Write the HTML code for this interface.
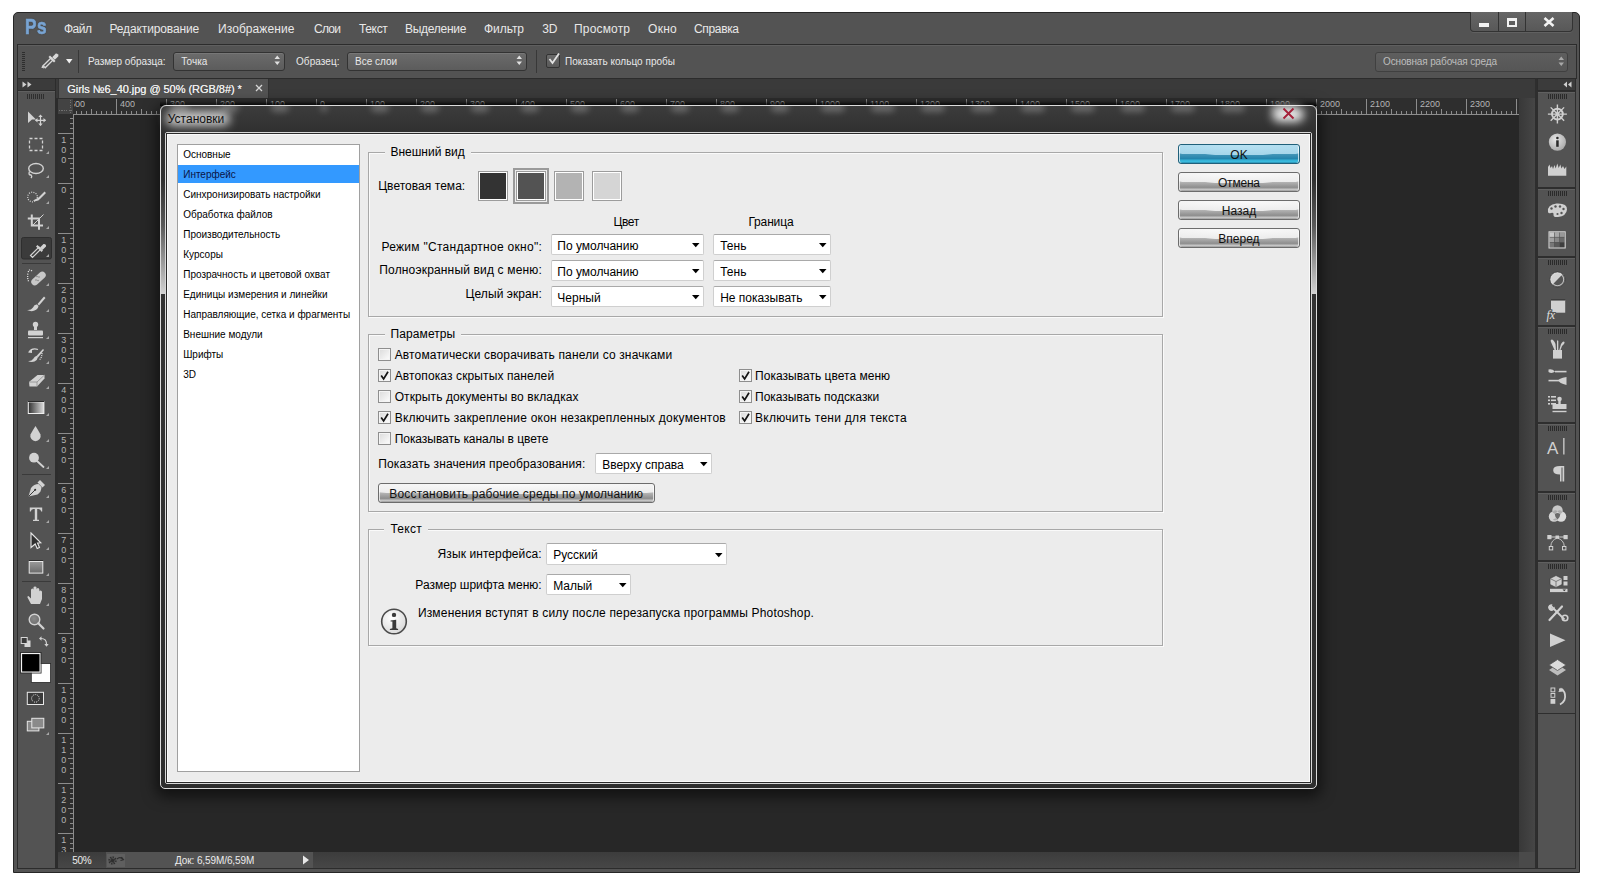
<!DOCTYPE html>
<html><head><meta charset="utf-8">
<style>
*{box-sizing:border-box;margin:0;padding:0}
html,body{width:1597px;height:892px;overflow:hidden;background:#fff;font-family:"Liberation Sans",sans-serif}
.a{position:absolute}
.t{position:absolute;white-space:pre;line-height:1}
svg.a{overflow:visible}

</style></head><body>
<div class="a" style="left:13px;top:12px;width:1567px;height:861px;background:#535353;border:1px solid #262626;border-radius:5px 5px 0 0"></div>
<div class="a" style="left:1470px;top:12px;width:103px;height:20px;background:linear-gradient(#666,#585858);border:1px solid #333;border-top:none;border-radius:0 0 4px 4px;box-shadow:0 1px 0 #606060"></div>
<div class="a" style="left:1498px;top:12px;width:1px;height:19px;background:#333"></div>
<div class="a" style="left:1525px;top:12px;width:1px;height:19px;background:#333"></div>
<div class="a" style="left:1479px;top:23px;width:10px;height:4px;background:#f2f2f2"></div>
<div class="a" style="left:1507px;top:18px;width:10px;height:9px;border:2px solid #f2f2f2;border-top-width:3px"></div>
<svg class="a" style="left:1543px;top:17px;" width="12" height="10" viewBox="0 0 12 10"><path d="M1.5 1 L10.5 9 M10.5 1 L1.5 9" stroke="#f2f2f2" stroke-width="2.6"/></svg>
<div class="t" style="left:24.60px;top:15.98px;font-size:22px;color:#79a4d2;font-weight:bold;font-family:'Liberation Sans';transform:scaleX(0.78);transform-origin:0 0;letter-spacing:0.8px;-webkit-text-stroke:0.7px #79a4d2;text-shadow:0 0 1.5px #24323f;">Ps</div>
<div class="t" style="left:64.00px;top:22.64px;font-size:12px;color:#e8e8e8;font-weight:normal;font-family:'Liberation Sans';letter-spacing:-0.505px;">Файл</div>
<div class="t" style="left:109.50px;top:22.64px;font-size:12px;color:#e8e8e8;font-weight:normal;font-family:'Liberation Sans';letter-spacing:-0.132px;">Редактирование</div>
<div class="t" style="left:218.00px;top:22.64px;font-size:12px;color:#e8e8e8;font-weight:normal;font-family:'Liberation Sans';letter-spacing:0.081px;">Изображение</div>
<div class="t" style="left:314.00px;top:22.64px;font-size:12px;color:#e8e8e8;font-weight:normal;font-family:'Liberation Sans';letter-spacing:-0.729px;">Слои</div>
<div class="t" style="left:359.00px;top:22.64px;font-size:12px;color:#e8e8e8;font-weight:normal;font-family:'Liberation Sans';letter-spacing:-0.355px;">Текст</div>
<div class="t" style="left:405.00px;top:22.64px;font-size:12px;color:#e8e8e8;font-weight:normal;font-family:'Liberation Sans';letter-spacing:-0.274px;">Выделение</div>
<div class="t" style="left:484.00px;top:22.64px;font-size:12px;color:#e8e8e8;font-weight:normal;font-family:'Liberation Sans';letter-spacing:-0.062px;">Фильтр</div>
<div class="t" style="left:542.30px;top:22.64px;font-size:12px;color:#e8e8e8;font-weight:normal;font-family:'Liberation Sans';letter-spacing:-0.344px;">3D</div>
<div class="t" style="left:574.00px;top:22.64px;font-size:12px;color:#e8e8e8;font-weight:normal;font-family:'Liberation Sans';letter-spacing:0.170px;">Просмотр</div>
<div class="t" style="left:648.00px;top:22.64px;font-size:12px;color:#e8e8e8;font-weight:normal;font-family:'Liberation Sans';letter-spacing:0.303px;">Окно</div>
<div class="t" style="left:694.00px;top:22.64px;font-size:12px;color:#e8e8e8;font-weight:normal;font-family:'Liberation Sans';letter-spacing:-0.346px;">Справка</div>
<div class="a" style="left:17px;top:44px;width:1560px;height:35px;background:#535353;border:1px solid #2c2c2c;border-bottom:none;box-shadow:inset 0 1px 0 #5f5f5f"></div>
<div class="a" style="left:22px;top:52px;width:3px;height:20px;background:repeating-linear-gradient(#2e2e2e 0 1px,transparent 1px 2px)"></div>
<svg class="a" style="left:40px;top:48.6px;" width="20" height="20" viewBox="0 0 20 20"><g fill="none" stroke="#d8d8d8" stroke-width="1.3"><path d="M3 17 L2.2 18.2 L3.2 18.6 Z" fill="#d8d8d8"/><path d="M3.2 16.8 L11 9 L13 11 L5.2 18.8 Z"/></g><path d="M10 6.5 L15.5 12 L14 13.5 L8.5 8 Z" fill="#d8d8d8"/><path d="M12.2 8.2 L15.8 4.6 A2.2 2.2 0 0 1 18.4 7.2 L14.8 10.8 Z" fill="#d8d8d8"/></svg>
<svg class="a" style="left:66px;top:58.6px;" width="7" height="5" viewBox="0 0 7 5"><path d="M0 0 H6.5 L3.25 4.5 Z" fill="#f0f0f0"/></svg>
<div class="a" style="left:78px;top:50px;width:1px;height:23px;background:#383838"></div>
<div class="t" style="left:88.00px;top:56.73px;font-size:10px;color:#e8e8e8;font-weight:normal;font-family:'Liberation Sans';letter-spacing:-0.044px;">Размер образца:</div>
<div class="a" style="left:173px;top:52px;width:112px;height:19px;background:linear-gradient(#6b6b6b,#5c5c5c);border:1px solid #333;border-radius:3px;box-shadow:inset 0 1px 0 #777"></div>
<div class="t" style="left:181.30px;top:56.73px;font-size:10px;color:#e8e8e8;font-weight:normal;font-family:'Liberation Sans';">Точка</div>
<svg class="a" style="left:274px;top:55px;" width="7" height="11" viewBox="0 0 7 11"><path d="M0.5 4 L3.25 0.5 L6 4 Z M0.5 6.5 L3.25 10 L6 6.5 Z" fill="#e0e0e0"/></svg>
<div class="t" style="left:296.00px;top:56.73px;font-size:10px;color:#e8e8e8;font-weight:normal;font-family:'Liberation Sans';letter-spacing:0.062px;">Образец:</div>
<div class="a" style="left:347px;top:52px;width:180px;height:19px;background:linear-gradient(#6b6b6b,#5c5c5c);border:1px solid #333;border-radius:3px;box-shadow:inset 0 1px 0 #777"></div>
<div class="t" style="left:355.00px;top:56.73px;font-size:10px;color:#e8e8e8;font-weight:normal;font-family:'Liberation Sans';">Все слои</div>
<svg class="a" style="left:516px;top:55px;" width="7" height="11" viewBox="0 0 7 11"><path d="M0.5 4 L3.25 0.5 L6 4 Z M0.5 6.5 L3.25 10 L6 6.5 Z" fill="#e0e0e0"/></svg>
<div class="a" style="left:536px;top:50px;width:1px;height:23px;background:#383838"></div>
<div class="a" style="left:546px;top:54px;width:14px;height:14px;background:linear-gradient(#6a6a6a,#5a5a5a);border:1px solid #333;border-radius:2px"></div>
<svg class="a" style="left:547px;top:52px;" width="14" height="14" viewBox="0 0 14 14"><path d="M2.5 7 L5.5 11 L12 1.5" fill="none" stroke="#e4e4e4" stroke-width="1.8"/></svg>
<div class="t" style="left:565.00px;top:56.73px;font-size:10px;color:#e8e8e8;font-weight:normal;font-family:'Liberation Sans';letter-spacing:0.021px;">Показать кольцо пробы</div>
<div class="a" style="left:1375px;top:52px;width:193px;height:20px;background:linear-gradient(#5e5e5e,#565656);border:1px solid #404040;border-radius:3px"></div>
<div class="t" style="left:1383.00px;top:56.53px;font-size:10px;color:#bdbdbd;font-weight:normal;font-family:'Liberation Sans';letter-spacing:-0.139px;">Основная рабочая среда</div>
<svg class="a" style="left:1558px;top:56px;" width="7" height="11" viewBox="0 0 7 11"><path d="M0.5 4 L3.25 0.5 L6 4 Z M0.5 6.5 L3.25 10 L6 6.5 Z" fill="#a8a8a8"/></svg>
<div class="a" style="left:17px;top:78px;width:39px;height:13px;background:#3b3b3b;border:1px solid #2c2c2c"></div>
<svg class="a" style="left:22px;top:81px;" width="12" height="8" viewBox="0 0 12 8"><path d="M0.5 0.5 L4.5 3.5 L0.5 6.5 Z M5.5 0.5 L9.5 3.5 L5.5 6.5 Z" fill="#cfcfcf"/></svg>
<div class="a" style="left:17px;top:90px;width:39px;height:779px;background:#535353;border:1px solid #2c2c2c;box-shadow:inset 0 1px 0 #606060"></div>
<div class="a" style="left:27px;top:94px;width:18px;height:5px;background:repeating-linear-gradient(90deg,#2e2e2e 0 1px,transparent 1px 2px)"></div>
<div class="a" style="left:56px;top:78px;width:1481px;height:21px;background:#3a3a3a;border-top:1px solid #2c2c2c"></div>
<div class="a" style="left:58px;top:79px;width:211px;height:20px;background:#535353;border-left:1px solid #333;border-right:1px solid #333"></div>
<div class="t" style="left:67.30px;top:84.09px;font-size:11px;color:#ececec;font-weight:bold;font-family:'Liberation Sans';letter-spacing:-0.039px;font-weight:normal;text-shadow:0 0 0.4px #ececec;">Girls №6_40.jpg @ 50% (RGB/8#) *</div>
<svg class="a" style="left:255px;top:84px;" width="8" height="8" viewBox="0 0 8 8"><path d="M1 1 L7 7 M7 1 L1 7" stroke="#d6d6d6" stroke-width="1.3"/></svg>
<div class="a" style="left:56px;top:98px;width:2px;height:771px;background:#2c2c2c"></div>
<div class="a" style="left:58px;top:98px;width:1461px;height:16px;background:#2e2e2e"></div>
<div class="a" style="left:58px;top:114px;width:16px;height:738px;background:#2e2e2e"></div>
<div class="a" style="left:58px;top:99px;width:15px;height:15px;background:#434343"></div>
<div class="a" style="left:70px;top:100px;width:1px;height:13px;background:repeating-linear-gradient(#707070 0 1px,transparent 1px 2.5px)"></div>
<div class="a" style="left:59px;top:110px;width:13px;height:1px;background:repeating-linear-gradient(90deg,#707070 0 1px,transparent 1px 2.5px)"></div>
<div class="a" style="left:74px;top:114px;width:1445px;height:738px;background:#272727"></div>
<div class="a" style="left:74px;top:114px;width:1445px;height:1px;background:#8c8c8c"></div>
<div class="a" style="left:73px;top:114px;width:1px;height:738px;background:#8c8c8c"></div>
<svg class="a" style="left:0;top:0" width="1597" height="892"><g fill="#8c8c8c"><rect x="76" y="111" width="1" height="3"/><rect x="81" y="111" width="1" height="3"/><rect x="86" y="111" width="1" height="3"/><rect x="91" y="109" width="1" height="5"/><rect x="96" y="111" width="1" height="3"/><rect x="101" y="111" width="1" height="3"/><rect x="106" y="111" width="1" height="3"/><rect x="111" y="111" width="1" height="3"/><rect x="116" y="99" width="1" height="15"/><rect x="121" y="111" width="1" height="3"/><rect x="126" y="111" width="1" height="3"/><rect x="131" y="111" width="1" height="3"/><rect x="136" y="111" width="1" height="3"/><rect x="141" y="109" width="1" height="5"/><rect x="146" y="111" width="1" height="3"/><rect x="151" y="111" width="1" height="3"/><rect x="156" y="111" width="1" height="3"/><rect x="161" y="111" width="1" height="3"/><rect x="166" y="99" width="1" height="15"/><rect x="171" y="111" width="1" height="3"/><rect x="176" y="111" width="1" height="3"/><rect x="181" y="111" width="1" height="3"/><rect x="186" y="111" width="1" height="3"/><rect x="191" y="109" width="1" height="5"/><rect x="196" y="111" width="1" height="3"/><rect x="201" y="111" width="1" height="3"/><rect x="206" y="111" width="1" height="3"/><rect x="211" y="111" width="1" height="3"/><rect x="216" y="99" width="1" height="15"/><rect x="221" y="111" width="1" height="3"/><rect x="226" y="111" width="1" height="3"/><rect x="231" y="111" width="1" height="3"/><rect x="236" y="111" width="1" height="3"/><rect x="241" y="109" width="1" height="5"/><rect x="246" y="111" width="1" height="3"/><rect x="251" y="111" width="1" height="3"/><rect x="256" y="111" width="1" height="3"/><rect x="261" y="111" width="1" height="3"/><rect x="266" y="99" width="1" height="15"/><rect x="271" y="111" width="1" height="3"/><rect x="276" y="111" width="1" height="3"/><rect x="281" y="111" width="1" height="3"/><rect x="286" y="111" width="1" height="3"/><rect x="291" y="109" width="1" height="5"/><rect x="296" y="111" width="1" height="3"/><rect x="301" y="111" width="1" height="3"/><rect x="306" y="111" width="1" height="3"/><rect x="311" y="111" width="1" height="3"/><rect x="316" y="99" width="1" height="15"/><rect x="321" y="111" width="1" height="3"/><rect x="326" y="111" width="1" height="3"/><rect x="331" y="111" width="1" height="3"/><rect x="336" y="111" width="1" height="3"/><rect x="341" y="109" width="1" height="5"/><rect x="346" y="111" width="1" height="3"/><rect x="351" y="111" width="1" height="3"/><rect x="356" y="111" width="1" height="3"/><rect x="361" y="111" width="1" height="3"/><rect x="366" y="99" width="1" height="15"/><rect x="371" y="111" width="1" height="3"/><rect x="376" y="111" width="1" height="3"/><rect x="381" y="111" width="1" height="3"/><rect x="386" y="111" width="1" height="3"/><rect x="391" y="109" width="1" height="5"/><rect x="396" y="111" width="1" height="3"/><rect x="401" y="111" width="1" height="3"/><rect x="406" y="111" width="1" height="3"/><rect x="411" y="111" width="1" height="3"/><rect x="416" y="99" width="1" height="15"/><rect x="421" y="111" width="1" height="3"/><rect x="426" y="111" width="1" height="3"/><rect x="431" y="111" width="1" height="3"/><rect x="436" y="111" width="1" height="3"/><rect x="441" y="109" width="1" height="5"/><rect x="446" y="111" width="1" height="3"/><rect x="451" y="111" width="1" height="3"/><rect x="456" y="111" width="1" height="3"/><rect x="461" y="111" width="1" height="3"/><rect x="466" y="99" width="1" height="15"/><rect x="471" y="111" width="1" height="3"/><rect x="476" y="111" width="1" height="3"/><rect x="481" y="111" width="1" height="3"/><rect x="486" y="111" width="1" height="3"/><rect x="491" y="109" width="1" height="5"/><rect x="496" y="111" width="1" height="3"/><rect x="501" y="111" width="1" height="3"/><rect x="506" y="111" width="1" height="3"/><rect x="511" y="111" width="1" height="3"/><rect x="516" y="99" width="1" height="15"/><rect x="521" y="111" width="1" height="3"/><rect x="526" y="111" width="1" height="3"/><rect x="531" y="111" width="1" height="3"/><rect x="536" y="111" width="1" height="3"/><rect x="541" y="109" width="1" height="5"/><rect x="546" y="111" width="1" height="3"/><rect x="551" y="111" width="1" height="3"/><rect x="556" y="111" width="1" height="3"/><rect x="561" y="111" width="1" height="3"/><rect x="566" y="99" width="1" height="15"/><rect x="571" y="111" width="1" height="3"/><rect x="576" y="111" width="1" height="3"/><rect x="581" y="111" width="1" height="3"/><rect x="586" y="111" width="1" height="3"/><rect x="591" y="109" width="1" height="5"/><rect x="596" y="111" width="1" height="3"/><rect x="601" y="111" width="1" height="3"/><rect x="606" y="111" width="1" height="3"/><rect x="611" y="111" width="1" height="3"/><rect x="616" y="99" width="1" height="15"/><rect x="621" y="111" width="1" height="3"/><rect x="626" y="111" width="1" height="3"/><rect x="631" y="111" width="1" height="3"/><rect x="636" y="111" width="1" height="3"/><rect x="641" y="109" width="1" height="5"/><rect x="646" y="111" width="1" height="3"/><rect x="651" y="111" width="1" height="3"/><rect x="656" y="111" width="1" height="3"/><rect x="661" y="111" width="1" height="3"/><rect x="666" y="99" width="1" height="15"/><rect x="671" y="111" width="1" height="3"/><rect x="676" y="111" width="1" height="3"/><rect x="681" y="111" width="1" height="3"/><rect x="686" y="111" width="1" height="3"/><rect x="691" y="109" width="1" height="5"/><rect x="696" y="111" width="1" height="3"/><rect x="701" y="111" width="1" height="3"/><rect x="706" y="111" width="1" height="3"/><rect x="711" y="111" width="1" height="3"/><rect x="716" y="99" width="1" height="15"/><rect x="721" y="111" width="1" height="3"/><rect x="726" y="111" width="1" height="3"/><rect x="731" y="111" width="1" height="3"/><rect x="736" y="111" width="1" height="3"/><rect x="741" y="109" width="1" height="5"/><rect x="746" y="111" width="1" height="3"/><rect x="751" y="111" width="1" height="3"/><rect x="756" y="111" width="1" height="3"/><rect x="761" y="111" width="1" height="3"/><rect x="766" y="99" width="1" height="15"/><rect x="771" y="111" width="1" height="3"/><rect x="776" y="111" width="1" height="3"/><rect x="781" y="111" width="1" height="3"/><rect x="786" y="111" width="1" height="3"/><rect x="791" y="109" width="1" height="5"/><rect x="796" y="111" width="1" height="3"/><rect x="801" y="111" width="1" height="3"/><rect x="806" y="111" width="1" height="3"/><rect x="811" y="111" width="1" height="3"/><rect x="816" y="99" width="1" height="15"/><rect x="821" y="111" width="1" height="3"/><rect x="826" y="111" width="1" height="3"/><rect x="831" y="111" width="1" height="3"/><rect x="836" y="111" width="1" height="3"/><rect x="841" y="109" width="1" height="5"/><rect x="846" y="111" width="1" height="3"/><rect x="851" y="111" width="1" height="3"/><rect x="856" y="111" width="1" height="3"/><rect x="861" y="111" width="1" height="3"/><rect x="866" y="99" width="1" height="15"/><rect x="871" y="111" width="1" height="3"/><rect x="876" y="111" width="1" height="3"/><rect x="881" y="111" width="1" height="3"/><rect x="886" y="111" width="1" height="3"/><rect x="891" y="109" width="1" height="5"/><rect x="896" y="111" width="1" height="3"/><rect x="901" y="111" width="1" height="3"/><rect x="906" y="111" width="1" height="3"/><rect x="911" y="111" width="1" height="3"/><rect x="916" y="99" width="1" height="15"/><rect x="921" y="111" width="1" height="3"/><rect x="926" y="111" width="1" height="3"/><rect x="931" y="111" width="1" height="3"/><rect x="936" y="111" width="1" height="3"/><rect x="941" y="109" width="1" height="5"/><rect x="946" y="111" width="1" height="3"/><rect x="951" y="111" width="1" height="3"/><rect x="956" y="111" width="1" height="3"/><rect x="961" y="111" width="1" height="3"/><rect x="966" y="99" width="1" height="15"/><rect x="971" y="111" width="1" height="3"/><rect x="976" y="111" width="1" height="3"/><rect x="981" y="111" width="1" height="3"/><rect x="986" y="111" width="1" height="3"/><rect x="991" y="109" width="1" height="5"/><rect x="996" y="111" width="1" height="3"/><rect x="1001" y="111" width="1" height="3"/><rect x="1006" y="111" width="1" height="3"/><rect x="1011" y="111" width="1" height="3"/><rect x="1016" y="99" width="1" height="15"/><rect x="1021" y="111" width="1" height="3"/><rect x="1026" y="111" width="1" height="3"/><rect x="1031" y="111" width="1" height="3"/><rect x="1036" y="111" width="1" height="3"/><rect x="1041" y="109" width="1" height="5"/><rect x="1046" y="111" width="1" height="3"/><rect x="1051" y="111" width="1" height="3"/><rect x="1056" y="111" width="1" height="3"/><rect x="1061" y="111" width="1" height="3"/><rect x="1066" y="99" width="1" height="15"/><rect x="1071" y="111" width="1" height="3"/><rect x="1076" y="111" width="1" height="3"/><rect x="1081" y="111" width="1" height="3"/><rect x="1086" y="111" width="1" height="3"/><rect x="1091" y="109" width="1" height="5"/><rect x="1096" y="111" width="1" height="3"/><rect x="1101" y="111" width="1" height="3"/><rect x="1106" y="111" width="1" height="3"/><rect x="1111" y="111" width="1" height="3"/><rect x="1116" y="99" width="1" height="15"/><rect x="1121" y="111" width="1" height="3"/><rect x="1126" y="111" width="1" height="3"/><rect x="1131" y="111" width="1" height="3"/><rect x="1136" y="111" width="1" height="3"/><rect x="1141" y="109" width="1" height="5"/><rect x="1146" y="111" width="1" height="3"/><rect x="1151" y="111" width="1" height="3"/><rect x="1156" y="111" width="1" height="3"/><rect x="1161" y="111" width="1" height="3"/><rect x="1166" y="99" width="1" height="15"/><rect x="1171" y="111" width="1" height="3"/><rect x="1176" y="111" width="1" height="3"/><rect x="1181" y="111" width="1" height="3"/><rect x="1186" y="111" width="1" height="3"/><rect x="1191" y="109" width="1" height="5"/><rect x="1196" y="111" width="1" height="3"/><rect x="1201" y="111" width="1" height="3"/><rect x="1206" y="111" width="1" height="3"/><rect x="1211" y="111" width="1" height="3"/><rect x="1216" y="99" width="1" height="15"/><rect x="1221" y="111" width="1" height="3"/><rect x="1226" y="111" width="1" height="3"/><rect x="1231" y="111" width="1" height="3"/><rect x="1236" y="111" width="1" height="3"/><rect x="1241" y="109" width="1" height="5"/><rect x="1246" y="111" width="1" height="3"/><rect x="1251" y="111" width="1" height="3"/><rect x="1256" y="111" width="1" height="3"/><rect x="1261" y="111" width="1" height="3"/><rect x="1266" y="99" width="1" height="15"/><rect x="1271" y="111" width="1" height="3"/><rect x="1276" y="111" width="1" height="3"/><rect x="1281" y="111" width="1" height="3"/><rect x="1286" y="111" width="1" height="3"/><rect x="1291" y="109" width="1" height="5"/><rect x="1296" y="111" width="1" height="3"/><rect x="1301" y="111" width="1" height="3"/><rect x="1306" y="111" width="1" height="3"/><rect x="1311" y="111" width="1" height="3"/><rect x="1316" y="99" width="1" height="15"/><rect x="1321" y="111" width="1" height="3"/><rect x="1326" y="111" width="1" height="3"/><rect x="1331" y="111" width="1" height="3"/><rect x="1336" y="111" width="1" height="3"/><rect x="1341" y="109" width="1" height="5"/><rect x="1346" y="111" width="1" height="3"/><rect x="1351" y="111" width="1" height="3"/><rect x="1356" y="111" width="1" height="3"/><rect x="1361" y="111" width="1" height="3"/><rect x="1366" y="99" width="1" height="15"/><rect x="1371" y="111" width="1" height="3"/><rect x="1376" y="111" width="1" height="3"/><rect x="1381" y="111" width="1" height="3"/><rect x="1386" y="111" width="1" height="3"/><rect x="1391" y="109" width="1" height="5"/><rect x="1396" y="111" width="1" height="3"/><rect x="1401" y="111" width="1" height="3"/><rect x="1406" y="111" width="1" height="3"/><rect x="1411" y="111" width="1" height="3"/><rect x="1416" y="99" width="1" height="15"/><rect x="1421" y="111" width="1" height="3"/><rect x="1426" y="111" width="1" height="3"/><rect x="1431" y="111" width="1" height="3"/><rect x="1436" y="111" width="1" height="3"/><rect x="1441" y="109" width="1" height="5"/><rect x="1446" y="111" width="1" height="3"/><rect x="1451" y="111" width="1" height="3"/><rect x="1456" y="111" width="1" height="3"/><rect x="1461" y="111" width="1" height="3"/><rect x="1466" y="99" width="1" height="15"/><rect x="1471" y="111" width="1" height="3"/><rect x="1476" y="111" width="1" height="3"/><rect x="1481" y="111" width="1" height="3"/><rect x="1486" y="111" width="1" height="3"/><rect x="1491" y="109" width="1" height="5"/><rect x="1496" y="111" width="1" height="3"/><rect x="1501" y="111" width="1" height="3"/><rect x="1506" y="111" width="1" height="3"/><rect x="1511" y="111" width="1" height="3"/><rect x="1516" y="99" width="1" height="15"/></g></svg>
<div class="t" style="left:70.00px;top:99.68px;font-size:9px;color:#b4b4b4;font-weight:normal;font-family:'Liberation Sans';clip-path:inset(0 0 0 4px);">500</div>
<div class="t" style="left:120.00px;top:99.68px;font-size:9px;color:#b4b4b4;font-weight:normal;font-family:'Liberation Sans';clip-path:inset(0 0 0 0px);">400</div>
<div class="t" style="left:170.00px;top:99.68px;font-size:9px;color:#b4b4b4;font-weight:normal;font-family:'Liberation Sans';clip-path:inset(0 0 0 0px);">300</div>
<div class="t" style="left:220.00px;top:99.68px;font-size:9px;color:#b4b4b4;font-weight:normal;font-family:'Liberation Sans';clip-path:inset(0 0 0 0px);">200</div>
<div class="t" style="left:270.00px;top:99.68px;font-size:9px;color:#b4b4b4;font-weight:normal;font-family:'Liberation Sans';clip-path:inset(0 0 0 0px);">100</div>
<div class="t" style="left:320.00px;top:99.68px;font-size:9px;color:#b4b4b4;font-weight:normal;font-family:'Liberation Sans';clip-path:inset(0 0 0 0px);">0</div>
<div class="t" style="left:370.00px;top:99.68px;font-size:9px;color:#b4b4b4;font-weight:normal;font-family:'Liberation Sans';clip-path:inset(0 0 0 0px);">100</div>
<div class="t" style="left:420.00px;top:99.68px;font-size:9px;color:#b4b4b4;font-weight:normal;font-family:'Liberation Sans';clip-path:inset(0 0 0 0px);">200</div>
<div class="t" style="left:470.00px;top:99.68px;font-size:9px;color:#b4b4b4;font-weight:normal;font-family:'Liberation Sans';clip-path:inset(0 0 0 0px);">300</div>
<div class="t" style="left:520.00px;top:99.68px;font-size:9px;color:#b4b4b4;font-weight:normal;font-family:'Liberation Sans';clip-path:inset(0 0 0 0px);">400</div>
<div class="t" style="left:570.00px;top:99.68px;font-size:9px;color:#b4b4b4;font-weight:normal;font-family:'Liberation Sans';clip-path:inset(0 0 0 0px);">500</div>
<div class="t" style="left:620.00px;top:99.68px;font-size:9px;color:#b4b4b4;font-weight:normal;font-family:'Liberation Sans';clip-path:inset(0 0 0 0px);">600</div>
<div class="t" style="left:670.00px;top:99.68px;font-size:9px;color:#b4b4b4;font-weight:normal;font-family:'Liberation Sans';clip-path:inset(0 0 0 0px);">700</div>
<div class="t" style="left:720.00px;top:99.68px;font-size:9px;color:#b4b4b4;font-weight:normal;font-family:'Liberation Sans';clip-path:inset(0 0 0 0px);">800</div>
<div class="t" style="left:770.00px;top:99.68px;font-size:9px;color:#b4b4b4;font-weight:normal;font-family:'Liberation Sans';clip-path:inset(0 0 0 0px);">900</div>
<div class="t" style="left:820.00px;top:99.68px;font-size:9px;color:#b4b4b4;font-weight:normal;font-family:'Liberation Sans';clip-path:inset(0 0 0 0px);">1000</div>
<div class="t" style="left:870.00px;top:99.68px;font-size:9px;color:#b4b4b4;font-weight:normal;font-family:'Liberation Sans';clip-path:inset(0 0 0 0px);">1100</div>
<div class="t" style="left:920.00px;top:99.68px;font-size:9px;color:#b4b4b4;font-weight:normal;font-family:'Liberation Sans';clip-path:inset(0 0 0 0px);">1200</div>
<div class="t" style="left:970.00px;top:99.68px;font-size:9px;color:#b4b4b4;font-weight:normal;font-family:'Liberation Sans';clip-path:inset(0 0 0 0px);">1300</div>
<div class="t" style="left:1020.00px;top:99.68px;font-size:9px;color:#b4b4b4;font-weight:normal;font-family:'Liberation Sans';clip-path:inset(0 0 0 0px);">1400</div>
<div class="t" style="left:1070.00px;top:99.68px;font-size:9px;color:#b4b4b4;font-weight:normal;font-family:'Liberation Sans';clip-path:inset(0 0 0 0px);">1500</div>
<div class="t" style="left:1120.00px;top:99.68px;font-size:9px;color:#b4b4b4;font-weight:normal;font-family:'Liberation Sans';clip-path:inset(0 0 0 0px);">1600</div>
<div class="t" style="left:1170.00px;top:99.68px;font-size:9px;color:#b4b4b4;font-weight:normal;font-family:'Liberation Sans';clip-path:inset(0 0 0 0px);">1700</div>
<div class="t" style="left:1220.00px;top:99.68px;font-size:9px;color:#b4b4b4;font-weight:normal;font-family:'Liberation Sans';clip-path:inset(0 0 0 0px);">1800</div>
<div class="t" style="left:1270.00px;top:99.68px;font-size:9px;color:#b4b4b4;font-weight:normal;font-family:'Liberation Sans';clip-path:inset(0 0 0 0px);">1900</div>
<div class="t" style="left:1320.00px;top:99.68px;font-size:9px;color:#b4b4b4;font-weight:normal;font-family:'Liberation Sans';clip-path:inset(0 0 0 0px);">2000</div>
<div class="t" style="left:1370.00px;top:99.68px;font-size:9px;color:#b4b4b4;font-weight:normal;font-family:'Liberation Sans';clip-path:inset(0 0 0 0px);">2100</div>
<div class="t" style="left:1420.00px;top:99.68px;font-size:9px;color:#b4b4b4;font-weight:normal;font-family:'Liberation Sans';clip-path:inset(0 0 0 0px);">2200</div>
<div class="t" style="left:1470.00px;top:99.68px;font-size:9px;color:#b4b4b4;font-weight:normal;font-family:'Liberation Sans';clip-path:inset(0 0 0 0px);">2300</div>
<svg class="a" style="left:0;top:0" width="1597" height="892"><g fill="#8c8c8c"><rect x="70" y="118" width="3" height="1"/><rect x="70" y="123" width="3" height="1"/><rect x="70" y="128" width="3" height="1"/><rect x="58" y="133" width="15" height="1"/><rect x="70" y="138" width="3" height="1"/><rect x="70" y="143" width="3" height="1"/><rect x="70" y="148" width="3" height="1"/><rect x="70" y="153" width="3" height="1"/><rect x="68" y="158" width="5" height="1"/><rect x="70" y="163" width="3" height="1"/><rect x="70" y="168" width="3" height="1"/><rect x="70" y="173" width="3" height="1"/><rect x="70" y="178" width="3" height="1"/><rect x="58" y="183" width="15" height="1"/><rect x="70" y="188" width="3" height="1"/><rect x="70" y="193" width="3" height="1"/><rect x="70" y="198" width="3" height="1"/><rect x="70" y="203" width="3" height="1"/><rect x="68" y="208" width="5" height="1"/><rect x="70" y="213" width="3" height="1"/><rect x="70" y="218" width="3" height="1"/><rect x="70" y="223" width="3" height="1"/><rect x="70" y="228" width="3" height="1"/><rect x="58" y="233" width="15" height="1"/><rect x="70" y="238" width="3" height="1"/><rect x="70" y="243" width="3" height="1"/><rect x="70" y="248" width="3" height="1"/><rect x="70" y="253" width="3" height="1"/><rect x="68" y="258" width="5" height="1"/><rect x="70" y="263" width="3" height="1"/><rect x="70" y="268" width="3" height="1"/><rect x="70" y="273" width="3" height="1"/><rect x="70" y="278" width="3" height="1"/><rect x="58" y="283" width="15" height="1"/><rect x="70" y="288" width="3" height="1"/><rect x="70" y="293" width="3" height="1"/><rect x="70" y="298" width="3" height="1"/><rect x="70" y="303" width="3" height="1"/><rect x="68" y="308" width="5" height="1"/><rect x="70" y="313" width="3" height="1"/><rect x="70" y="318" width="3" height="1"/><rect x="70" y="323" width="3" height="1"/><rect x="70" y="328" width="3" height="1"/><rect x="58" y="333" width="15" height="1"/><rect x="70" y="338" width="3" height="1"/><rect x="70" y="343" width="3" height="1"/><rect x="70" y="348" width="3" height="1"/><rect x="70" y="353" width="3" height="1"/><rect x="68" y="358" width="5" height="1"/><rect x="70" y="363" width="3" height="1"/><rect x="70" y="368" width="3" height="1"/><rect x="70" y="373" width="3" height="1"/><rect x="70" y="378" width="3" height="1"/><rect x="58" y="383" width="15" height="1"/><rect x="70" y="388" width="3" height="1"/><rect x="70" y="393" width="3" height="1"/><rect x="70" y="398" width="3" height="1"/><rect x="70" y="403" width="3" height="1"/><rect x="68" y="408" width="5" height="1"/><rect x="70" y="413" width="3" height="1"/><rect x="70" y="418" width="3" height="1"/><rect x="70" y="423" width="3" height="1"/><rect x="70" y="428" width="3" height="1"/><rect x="58" y="433" width="15" height="1"/><rect x="70" y="438" width="3" height="1"/><rect x="70" y="443" width="3" height="1"/><rect x="70" y="448" width="3" height="1"/><rect x="70" y="453" width="3" height="1"/><rect x="68" y="458" width="5" height="1"/><rect x="70" y="463" width="3" height="1"/><rect x="70" y="468" width="3" height="1"/><rect x="70" y="473" width="3" height="1"/><rect x="70" y="478" width="3" height="1"/><rect x="58" y="483" width="15" height="1"/><rect x="70" y="488" width="3" height="1"/><rect x="70" y="493" width="3" height="1"/><rect x="70" y="498" width="3" height="1"/><rect x="70" y="503" width="3" height="1"/><rect x="68" y="508" width="5" height="1"/><rect x="70" y="513" width="3" height="1"/><rect x="70" y="518" width="3" height="1"/><rect x="70" y="523" width="3" height="1"/><rect x="70" y="528" width="3" height="1"/><rect x="58" y="533" width="15" height="1"/><rect x="70" y="538" width="3" height="1"/><rect x="70" y="543" width="3" height="1"/><rect x="70" y="548" width="3" height="1"/><rect x="70" y="553" width="3" height="1"/><rect x="68" y="558" width="5" height="1"/><rect x="70" y="563" width="3" height="1"/><rect x="70" y="568" width="3" height="1"/><rect x="70" y="573" width="3" height="1"/><rect x="70" y="578" width="3" height="1"/><rect x="58" y="583" width="15" height="1"/><rect x="70" y="588" width="3" height="1"/><rect x="70" y="593" width="3" height="1"/><rect x="70" y="598" width="3" height="1"/><rect x="70" y="603" width="3" height="1"/><rect x="68" y="608" width="5" height="1"/><rect x="70" y="613" width="3" height="1"/><rect x="70" y="618" width="3" height="1"/><rect x="70" y="623" width="3" height="1"/><rect x="70" y="628" width="3" height="1"/><rect x="58" y="633" width="15" height="1"/><rect x="70" y="638" width="3" height="1"/><rect x="70" y="643" width="3" height="1"/><rect x="70" y="648" width="3" height="1"/><rect x="70" y="653" width="3" height="1"/><rect x="68" y="658" width="5" height="1"/><rect x="70" y="663" width="3" height="1"/><rect x="70" y="668" width="3" height="1"/><rect x="70" y="673" width="3" height="1"/><rect x="70" y="678" width="3" height="1"/><rect x="58" y="683" width="15" height="1"/><rect x="70" y="688" width="3" height="1"/><rect x="70" y="693" width="3" height="1"/><rect x="70" y="698" width="3" height="1"/><rect x="70" y="703" width="3" height="1"/><rect x="68" y="708" width="5" height="1"/><rect x="70" y="713" width="3" height="1"/><rect x="70" y="718" width="3" height="1"/><rect x="70" y="723" width="3" height="1"/><rect x="70" y="728" width="3" height="1"/><rect x="58" y="733" width="15" height="1"/><rect x="70" y="738" width="3" height="1"/><rect x="70" y="743" width="3" height="1"/><rect x="70" y="748" width="3" height="1"/><rect x="70" y="753" width="3" height="1"/><rect x="68" y="758" width="5" height="1"/><rect x="70" y="763" width="3" height="1"/><rect x="70" y="768" width="3" height="1"/><rect x="70" y="773" width="3" height="1"/><rect x="70" y="778" width="3" height="1"/><rect x="58" y="783" width="15" height="1"/><rect x="70" y="788" width="3" height="1"/><rect x="70" y="793" width="3" height="1"/><rect x="70" y="798" width="3" height="1"/><rect x="70" y="803" width="3" height="1"/><rect x="68" y="808" width="5" height="1"/><rect x="70" y="813" width="3" height="1"/><rect x="70" y="818" width="3" height="1"/><rect x="70" y="823" width="3" height="1"/><rect x="70" y="828" width="3" height="1"/><rect x="58" y="833" width="15" height="1"/><rect x="70" y="838" width="3" height="1"/><rect x="70" y="843" width="3" height="1"/><rect x="70" y="848" width="3" height="1"/></g></svg>
<div class="t" style="left:61.20px;top:136.18px;font-size:9px;color:#b4b4b4;font-weight:normal;font-family:'Liberation Sans';">1</div>
<div class="t" style="left:61.20px;top:146.18px;font-size:9px;color:#b4b4b4;font-weight:normal;font-family:'Liberation Sans';">0</div>
<div class="t" style="left:61.20px;top:156.18px;font-size:9px;color:#b4b4b4;font-weight:normal;font-family:'Liberation Sans';">0</div>
<div class="t" style="left:61.20px;top:186.18px;font-size:9px;color:#b4b4b4;font-weight:normal;font-family:'Liberation Sans';">0</div>
<div class="t" style="left:61.20px;top:236.18px;font-size:9px;color:#b4b4b4;font-weight:normal;font-family:'Liberation Sans';">1</div>
<div class="t" style="left:61.20px;top:246.18px;font-size:9px;color:#b4b4b4;font-weight:normal;font-family:'Liberation Sans';">0</div>
<div class="t" style="left:61.20px;top:256.18px;font-size:9px;color:#b4b4b4;font-weight:normal;font-family:'Liberation Sans';">0</div>
<div class="t" style="left:61.20px;top:286.18px;font-size:9px;color:#b4b4b4;font-weight:normal;font-family:'Liberation Sans';">2</div>
<div class="t" style="left:61.20px;top:296.18px;font-size:9px;color:#b4b4b4;font-weight:normal;font-family:'Liberation Sans';">0</div>
<div class="t" style="left:61.20px;top:306.18px;font-size:9px;color:#b4b4b4;font-weight:normal;font-family:'Liberation Sans';">0</div>
<div class="t" style="left:61.20px;top:336.18px;font-size:9px;color:#b4b4b4;font-weight:normal;font-family:'Liberation Sans';">3</div>
<div class="t" style="left:61.20px;top:346.18px;font-size:9px;color:#b4b4b4;font-weight:normal;font-family:'Liberation Sans';">0</div>
<div class="t" style="left:61.20px;top:356.18px;font-size:9px;color:#b4b4b4;font-weight:normal;font-family:'Liberation Sans';">0</div>
<div class="t" style="left:61.20px;top:386.18px;font-size:9px;color:#b4b4b4;font-weight:normal;font-family:'Liberation Sans';">4</div>
<div class="t" style="left:61.20px;top:396.18px;font-size:9px;color:#b4b4b4;font-weight:normal;font-family:'Liberation Sans';">0</div>
<div class="t" style="left:61.20px;top:406.18px;font-size:9px;color:#b4b4b4;font-weight:normal;font-family:'Liberation Sans';">0</div>
<div class="t" style="left:61.20px;top:436.18px;font-size:9px;color:#b4b4b4;font-weight:normal;font-family:'Liberation Sans';">5</div>
<div class="t" style="left:61.20px;top:446.18px;font-size:9px;color:#b4b4b4;font-weight:normal;font-family:'Liberation Sans';">0</div>
<div class="t" style="left:61.20px;top:456.18px;font-size:9px;color:#b4b4b4;font-weight:normal;font-family:'Liberation Sans';">0</div>
<div class="t" style="left:61.20px;top:486.18px;font-size:9px;color:#b4b4b4;font-weight:normal;font-family:'Liberation Sans';">6</div>
<div class="t" style="left:61.20px;top:496.18px;font-size:9px;color:#b4b4b4;font-weight:normal;font-family:'Liberation Sans';">0</div>
<div class="t" style="left:61.20px;top:506.18px;font-size:9px;color:#b4b4b4;font-weight:normal;font-family:'Liberation Sans';">0</div>
<div class="t" style="left:61.20px;top:536.18px;font-size:9px;color:#b4b4b4;font-weight:normal;font-family:'Liberation Sans';">7</div>
<div class="t" style="left:61.20px;top:546.18px;font-size:9px;color:#b4b4b4;font-weight:normal;font-family:'Liberation Sans';">0</div>
<div class="t" style="left:61.20px;top:556.18px;font-size:9px;color:#b4b4b4;font-weight:normal;font-family:'Liberation Sans';">0</div>
<div class="t" style="left:61.20px;top:586.18px;font-size:9px;color:#b4b4b4;font-weight:normal;font-family:'Liberation Sans';">8</div>
<div class="t" style="left:61.20px;top:596.18px;font-size:9px;color:#b4b4b4;font-weight:normal;font-family:'Liberation Sans';">0</div>
<div class="t" style="left:61.20px;top:606.18px;font-size:9px;color:#b4b4b4;font-weight:normal;font-family:'Liberation Sans';">0</div>
<div class="t" style="left:61.20px;top:636.18px;font-size:9px;color:#b4b4b4;font-weight:normal;font-family:'Liberation Sans';">9</div>
<div class="t" style="left:61.20px;top:646.18px;font-size:9px;color:#b4b4b4;font-weight:normal;font-family:'Liberation Sans';">0</div>
<div class="t" style="left:61.20px;top:656.18px;font-size:9px;color:#b4b4b4;font-weight:normal;font-family:'Liberation Sans';">0</div>
<div class="t" style="left:61.20px;top:686.18px;font-size:9px;color:#b4b4b4;font-weight:normal;font-family:'Liberation Sans';">1</div>
<div class="t" style="left:61.20px;top:696.18px;font-size:9px;color:#b4b4b4;font-weight:normal;font-family:'Liberation Sans';">0</div>
<div class="t" style="left:61.20px;top:706.18px;font-size:9px;color:#b4b4b4;font-weight:normal;font-family:'Liberation Sans';">0</div>
<div class="t" style="left:61.20px;top:716.18px;font-size:9px;color:#b4b4b4;font-weight:normal;font-family:'Liberation Sans';">0</div>
<div class="t" style="left:61.20px;top:736.18px;font-size:9px;color:#b4b4b4;font-weight:normal;font-family:'Liberation Sans';">1</div>
<div class="t" style="left:61.20px;top:746.18px;font-size:9px;color:#b4b4b4;font-weight:normal;font-family:'Liberation Sans';">1</div>
<div class="t" style="left:61.20px;top:756.18px;font-size:9px;color:#b4b4b4;font-weight:normal;font-family:'Liberation Sans';">0</div>
<div class="t" style="left:61.20px;top:766.18px;font-size:9px;color:#b4b4b4;font-weight:normal;font-family:'Liberation Sans';">0</div>
<div class="t" style="left:61.20px;top:786.18px;font-size:9px;color:#b4b4b4;font-weight:normal;font-family:'Liberation Sans';">1</div>
<div class="t" style="left:61.20px;top:796.18px;font-size:9px;color:#b4b4b4;font-weight:normal;font-family:'Liberation Sans';">2</div>
<div class="t" style="left:61.20px;top:806.18px;font-size:9px;color:#b4b4b4;font-weight:normal;font-family:'Liberation Sans';">0</div>
<div class="t" style="left:61.20px;top:816.18px;font-size:9px;color:#b4b4b4;font-weight:normal;font-family:'Liberation Sans';">0</div>
<div class="t" style="left:61.20px;top:836.18px;font-size:9px;color:#b4b4b4;font-weight:normal;font-family:'Liberation Sans';">1</div>
<div class="t" style="left:61.20px;top:846.18px;font-size:9px;color:#b4b4b4;font-weight:normal;font-family:'Liberation Sans';">3</div>
<div class="a" style="left:1519px;top:98px;width:16px;height:754px;background:linear-gradient(90deg,#383838,#464646)"></div>
<div class="a" style="left:58px;top:852px;width:1461px;height:16px;background:linear-gradient(#3c3c3c,#474747)"></div>
<div class="a" style="left:1519px;top:852px;width:16px;height:16px;background:#4a4a4a"></div>
<div class="a" style="left:1535px;top:78px;width:2px;height:791px;background:#2e2e2e"></div>
<div class="a" style="left:106px;top:852px;width:207px;height:16px;background:#535353"></div>
<div class="t" style="left:72.30px;top:856.03px;font-size:10px;color:#ececec;font-weight:normal;font-family:'Liberation Sans';letter-spacing:-0.308px;">50%</div>
<div class="a" style="left:107px;top:854px;width:18px;height:13px;background:#5f5f5f"></div>
<div class="t" style="left:175.00px;top:856.03px;font-size:10px;color:#ececec;font-weight:normal;font-family:'Liberation Sans';letter-spacing:-0.097px;">Док: 6,59M/6,59M</div>
<svg class="a" style="left:302px;top:855px;" width="8" height="10" viewBox="0 0 8 10"><path d="M1 0.5 L7 5 L1 9.5 Z" fill="#e8e8e8"/></svg>
<div class="a" style="left:56px;top:868px;width:1481px;height:1px;background:#2c2c2c"></div>
<div class="a" style="left:1537px;top:78px;width:39px;height:13px;background:#3b3b3b;border:1px solid #2c2c2c"></div>
<svg class="a" style="left:1563px;top:81px;" width="9" height="7" viewBox="0 0 9 7"><path d="M4 0.5 L0.5 3.5 L4 6.5 Z M8.5 0.5 L5 3.5 L8.5 6.5 Z" fill="#cfcfcf"/></svg>
<div class="a" style="left:1537px;top:90px;width:39px;height:779px;background:#535353;border:1px solid #2c2c2c"></div>
<svg class="a" style="left:0;top:0" width="1597" height="892"><rect x="21.5" y="237.5" width="30" height="21.5" rx="2" fill="#3b3b3b" stroke="#2e2e2e"/><rect x="22" y="263" width="29" height="1" fill="#3a3a3a"/><path d="M28 111.5 L36 119.5 L32 119.5 L28 123 Z" fill="#d2d2d2"/><g stroke="#d2d2d2" stroke-width="1.2" fill="none"><path d="M35.5 120.3 H45.5 M40.5 115.5 V125.5"/></g><path d="M40.5 114.5 L38.3 117 H42.7 Z M40.5 126 L38.3 123.5 H42.7 Z M35 120.3 L37.5 118.1 V122.5 Z M46 120.3 L43.5 118.1 V122.5 Z" fill="#d2d2d2"/><rect x="29.5" y="138.5" width="13" height="12" fill="none" stroke="#d2d2d2" stroke-width="1.3" stroke-dasharray="3 2"/><path d="M46 154 L49 154 L49 151 Z" fill="#a8a8a8"/><ellipse cx="36" cy="168.5" rx="7.3" ry="5" fill="none" stroke="#d2d2d2" stroke-width="1.4"/><path d="M29.5 171.5 Q28 175 31 175 Q32.5 176.5 31 178" fill="none" stroke="#d2d2d2" stroke-width="1.3"/><path d="M46 178 L49 178 L49 175 Z" fill="#a8a8a8"/><circle cx="32.5" cy="197" r="4.8" fill="none" stroke="#d2d2d2" stroke-width="1.3" stroke-dasharray="1 1.3"/><path d="M33 200.5 Q36 199 38.5 197.5 L44.5 191.5 L46 193 L40 199 Q38 202 33 200.5 Z" fill="#d2d2d2"/><path d="M46 204 L49 204 L49 201 Z" fill="#a8a8a8"/><g stroke="#d2d2d2" stroke-width="2" fill="none"><path d="M31.8 214.5 V225.5 H43"/><path d="M27.8 218.6 H39 V229.8"/></g><path d="M33 225 L43.5 214.5" stroke="#d2d2d2" stroke-width="1"/><path d="M46 229 L49 229 L49 226 Z" fill="#a8a8a8"/><path d="M30.5 255.5 L39 247 L41 249 L32.5 257.5 Z" fill="none" stroke="#d2d2d2" stroke-width="1.2"/><path d="M37.5 245 L43 250.5 L41.5 252 L36 246.5 Z" fill="#d2d2d2"/><path d="M40 247.5 L43.5 244 A2 2 0 0 1 46 246.5 L42.5 250 Z" fill="#d2d2d2"/><path d="M46 257 L49 257 L49 254 Z" fill="#a8a8a8"/><path d="M32 271 Q29 268 28 273 Q27 279 29 282" fill="none" stroke="#e8e8e8" stroke-width="1.2" stroke-dasharray="1 1.2"/><rect x="30" y="275" width="17" height="7" rx="3.5" transform="rotate(-42 38.5 278.5)" fill="#c8c8c8"/><g fill="#777"><circle cx="36" cy="280" r=".7"/><circle cx="39" cy="277" r=".7"/><circle cx="38" cy="280.5" r=".7"/><circle cx="37" cy="276.5" r=".7"/></g><path d="M46 286 L49 286 L49 283 Z" fill="#a8a8a8"/><path d="M27 310 Q31 310.5 33 307.5 Q34.5 304 37 304.5 L38.5 306 Q38 309 34.5 310.5 Q31 312 27 310 Z" fill="#d2d2d2"/><path d="M37.5 304 L44 296.5 L45.5 298 L39 305.5 Z" fill="#d2d2d2"/><path d="M46 312 L49 312 L49 309 Z" fill="#a8a8a8"/><circle cx="35.5" cy="324.5" r="2.7" fill="#d2d2d2"/><rect x="34" y="325" width="3" height="5" fill="#d2d2d2"/><rect x="28" y="330.5" width="15" height="5" rx="1" fill="#d2d2d2"/><rect x="28" y="337" width="15" height="1.2" fill="#d2d2d2"/><path d="M46 339 L49 339 L49 336 Z" fill="#a8a8a8"/><path d="M29 352 Q32 347.5 38 349.5" fill="none" stroke="#d2d2d2" stroke-width="1.3"/><path d="M28 352.5 L32 349 L32 353 Z" fill="#d2d2d2"/><path d="M28 361 Q31.5 361.5 33.5 358.5 Q35 355.5 37 356 L38 357 Q37.5 360 34.5 361.5 Q31 362.5 28 361 Z" fill="#d2d2d2"/><path d="M36.5 356 L43 349 L44 350 L38 357.5 Z" fill="#d2d2d2"/><path d="M42 353 Q42 358 39 360" fill="none" stroke="#eee" stroke-width="1.1" stroke-dasharray="1 1"/><path d="M46 364 L49 364 L49 361 Z" fill="#a8a8a8"/><path d="M29 382 L37.5 375 H44.5 L44.5 378.5 L37 386.5 H29.5 Z" fill="#d2d2d2"/><path d="M29 382 H37 L44.5 375" fill="none" stroke="#8a8a8a" stroke-width=".8"/><path d="M37 382 V386.5" stroke="#8a8a8a" stroke-width=".8"/><path d="M46 389 L49 389 L49 386 Z" fill="#a8a8a8"/><defs><linearGradient id="gr1" x1="0" x2="1"><stop offset="0" stop-color="#303030"/><stop offset="1" stop-color="#e0e0e0"/></linearGradient><linearGradient id="gv1" x1="0" y1="0" x2="0" y2="1"><stop offset="0" stop-color="#9a9a9a"/><stop offset="1" stop-color="#6a6a6a"/></linearGradient><radialGradient id="zg" cx=".45" cy=".4" r=".6"><stop offset="0" stop-color="#8a8a8a"/><stop offset="1" stop-color="#6e6e6e"/></radialGradient></defs><rect x="28.3" y="401.9" width="15.6" height="11.6" fill="url(#gr1)" stroke="#f0f0f0" stroke-width="1"/><rect x="28" y="401" width="16" height="1" fill="#2c2c2c"/><path d="M46 416 L49 416 L49 413 Z" fill="#a8a8a8"/><path d="M35.5 426 Q38.5 430.5 40.5 434.5 A5.2 5.2 0 1 1 30.5 434.5 Q32.5 430.5 35.5 426 Z" fill="#d2d2d2"/><path d="M46 442 L49 442 L49 439 Z" fill="#a8a8a8"/><circle cx="34" cy="457.7" r="4.9" fill="#d2d2d2"/><path d="M37 461 L43.5 467" stroke="#d2d2d2" stroke-width="1.8" stroke-linecap="round"/><path d="M46 469 L49 469 L49 466 Z" fill="#a8a8a8"/><rect x="22" y="474" width="29" height="1" fill="#3a3a3a"/><path d="M28.5 496.5 L31 488 Q34 484 38.5 484 L41.5 487 Q41.5 491.5 37.5 494.5 Z" fill="#d2d2d2"/><path d="M37.5 482.5 L40 480 L45 485 L42.5 487.5 Z" fill="#d2d2d2"/><path d="M28.7 496.3 L35 490" stroke="#2a2a2a" stroke-width=".9"/><circle cx="35.2" cy="489.8" r="1" fill="#2a2a2a"/><path d="M46 498 L49 498 L49 495 Z" fill="#a8a8a8"/><path d="M29.8 507.5 H42.2 V511.5 H41.2 Q41 509.2 38.5 509 H37.2 V519.8 H39 V521 H33 V519.8 H34.8 V509 H33.5 Q31 509.2 30.8 511.5 H29.8 Z" fill="#d2d2d2"/><path d="M46 523 L49 523 L49 520 Z" fill="#a8a8a8"/><path d="M31 533 L40.8 542.8 L37.5 543 L39.5 547.5 L37.2 548.5 L35.2 544 L31 547.5 Z" fill="#2f2f2f" stroke="#e6e6e6" stroke-width="1.1"/><path d="M46 550 L49 550 L49 547 Z" fill="#a8a8a8"/><rect x="29.2" y="561.5" width="13.6" height="11.6" fill="url(#gv1)" stroke="#e8e8e8" stroke-width="1"/><rect x="29" y="560" width="14" height="1" fill="#2c2c2c"/><path d="M46 576 L49 576 L49 573 Z" fill="#a8a8a8"/><rect x="22" y="581" width="29" height="1" fill="#3a3a3a"/><path d="M31 604 L27.5 597.5 Q27 596 28.5 596 L31 598.5 V590 Q31 588.5 32.5 588.5 Q33.5 588.5 33.5 590 V587.5 Q33.5 586.5 35 586.5 Q36.5 586.5 36.5 587.5 V589.5 Q36.5 588 38 588 Q39.3 588 39.3 589.5 V591.5 Q39.3 590.5 40.5 590.5 Q42 590.5 42 592 V599 L40 604 Z" fill="#d2d2d2"/><path d="M46 606 L49 606 L49 603 Z" fill="#a8a8a8"/><circle cx="34.5" cy="619.5" r="5.3" fill="url(#zg)" stroke="#d2d2d2" stroke-width="1.4"/><path d="M38.3 623.3 L43.5 628.5" stroke="#d2d2d2" stroke-width="2.2" stroke-linecap="round"/><rect x="24.5" y="640.5" width="6" height="6.5" fill="#d8d8d8"/><rect x="21.2" y="637.5" width="6" height="6" fill="#3a3a3a" stroke="#d8d8d8" stroke-width="1"/><path d="M41 638.5 Q46.5 638.5 46.5 644" fill="none" stroke="#d2d2d2" stroke-width="1.2"/><path d="M39 638.5 L41.5 636.3 V640.7 Z M46.5 646.8 L44.3 644 H48.7 Z" fill="#d2d2d2"/><rect x="31.3" y="663.6" width="19.3" height="18.8" fill="#fff" stroke="#2a2a2a" stroke-width=".8"/><rect x="21.5" y="653.5" width="18.6" height="18.6" fill="#000" stroke="#f4f4f4" stroke-width="1.2"/><rect x="20.5" y="652.5" width="20.6" height="20.6" fill="none" stroke="#2a2a2a" stroke-width=".8"/><rect x="27.3" y="692.3" width="16.2" height="12.2" fill="#3a3a3a" stroke="#e8e8e8" stroke-width="1"/><circle cx="35.4" cy="698.4" r="3.8" fill="none" stroke="#eee" stroke-width="1" stroke-dasharray="1 1.1"/><rect x="27.3" y="721.3" width="11.6" height="9.6" fill="#888" stroke="#e6e6e6" stroke-width="1"/><rect x="31.8" y="718.3" width="12" height="9.6" fill="#8a8a8a" stroke="#e6e6e6" stroke-width="1"/><path d="M46 735 L49 735 L49 732 Z" fill="#a8a8a8"/></svg>
<svg class="a" style="left:0;top:0" width="1597" height="892"><defs><pattern id="grip" width="2" height="5" patternUnits="userSpaceOnUse"><rect width="1" height="5" fill="#2a2a2a"/></pattern><radialGradient id="dg1" cx=".4" cy=".35" r=".7"><stop offset="0" stop-color="#e6e6e6"/><stop offset="1" stop-color="#a8a8a8"/></radialGradient></defs><rect x="1537.5" y="91.5" width="38" height="96" fill="#535353" stroke="#2e2e2e"/><rect x="1538" y="92" width="37" height="1" fill="#606060"/><rect x="1547" y="94" width="20" height="5" fill="url(#grip)"/><rect x="1537.5" y="188.5" width="38" height="68" fill="#535353" stroke="#2e2e2e"/><rect x="1538" y="189" width="37" height="1" fill="#606060"/><rect x="1547" y="191" width="20" height="5" fill="url(#grip)"/><rect x="1537.5" y="257.5" width="38" height="68" fill="#535353" stroke="#2e2e2e"/><rect x="1538" y="258" width="37" height="1" fill="#606060"/><rect x="1547" y="260" width="20" height="5" fill="url(#grip)"/><rect x="1537.5" y="326.5" width="38" height="96" fill="#535353" stroke="#2e2e2e"/><rect x="1538" y="327" width="37" height="1" fill="#606060"/><rect x="1547" y="329" width="20" height="5" fill="url(#grip)"/><rect x="1537.5" y="423.5" width="38" height="68" fill="#535353" stroke="#2e2e2e"/><rect x="1538" y="424" width="37" height="1" fill="#606060"/><rect x="1547" y="426" width="20" height="5" fill="url(#grip)"/><rect x="1537.5" y="492.5" width="38" height="68" fill="#535353" stroke="#2e2e2e"/><rect x="1538" y="493" width="37" height="1" fill="#606060"/><rect x="1547" y="495" width="20" height="5" fill="url(#grip)"/><rect x="1537.5" y="561.5" width="38" height="152" fill="#535353" stroke="#2e2e2e"/><rect x="1538" y="562" width="37" height="1" fill="#606060"/><rect x="1547" y="564" width="20" height="5" fill="url(#grip)"/><path d="M1557.40 114.10 L1566.90 114.10 M1557.40 114.10 L1564.12 120.82 M1557.40 114.10 L1557.40 123.60 M1557.40 114.10 L1550.68 120.82 M1557.40 114.10 L1547.90 114.10 M1557.40 114.10 L1550.68 107.38 M1557.40 114.10 L1557.40 104.60 M1557.40 114.10 L1564.12 107.38 " stroke="#d0d0d0" stroke-width="1.4"/><circle cx="1557.4" cy="114.1" r="5.4" fill="none" stroke="#d0d0d0" stroke-width="1.9"/><circle cx="1557.4" cy="114.1" r="1.6" fill="#d0d0d0"/><circle cx="1557.4" cy="142.1" r="8.6" fill="url(#dg1)"/><circle cx="1557.4" cy="138" r="1.3" fill="#2a2a2a"/><rect x="1556.2" y="140.3" width="2.5" height="6.5" fill="#2a2a2a"/><path d="M1548 175.7 V167 L1549.5 164.5 L1550.5 168 L1552 166 L1553 169 L1554.5 165 L1555.7 168.5 L1557.3 163.5 L1558.7 168 L1560.3 164.5 L1561.5 168.5 L1563 166 L1564.5 169 L1566.3 166.5 V175.7 Z" fill="#d0d0d0"/><path d="M1548 212 Q1547 204.5 1556.5 203.5 Q1567.5 203 1567 209.5 Q1566.5 216 1558 217 Q1553 217.5 1553.5 214.5 Q1554 212 1551 213 Q1548.5 214 1548 212 Z" fill="#d0d0d0"/><g fill="#555"><circle cx="1551.5" cy="208.5" r="1.2"/><circle cx="1555.5" cy="206.5" r="1.2"/><circle cx="1560" cy="206.5" r="1.2"/><circle cx="1563.5" cy="209" r="1.2"/><circle cx="1561.5" cy="213" r="1.2"/><circle cx="1557.5" cy="214" r="1.1"/></g><rect x="1549.5" y="232.3" width="4.6" height="4.6" fill="#c8c8c8"/><rect x="1554.7" y="232.3" width="4.6" height="4.6" fill="#a8a8a8"/><rect x="1559.9" y="232.3" width="4.6" height="4.6" fill="#989898"/><rect x="1549.5" y="237.5" width="4.6" height="4.6" fill="#a0a0a0"/><rect x="1554.7" y="237.5" width="4.6" height="4.6" fill="#888"/><rect x="1559.9" y="237.5" width="4.6" height="4.6" fill="#6a6a6a"/><rect x="1549.5" y="242.70000000000002" width="4.6" height="4.6" fill="#777"/><rect x="1554.7" y="242.70000000000002" width="4.6" height="4.6" fill="#5a5a5a"/><rect x="1559.9" y="242.70000000000002" width="4.6" height="4.6" fill="#3e3e3e"/><rect x="1549" y="231.8" width="16.2" height="16.2" fill="none" stroke="#dcdcdc" stroke-width="1"/><circle cx="1557.5" cy="279.5" r="7.6" fill="#d2d2d2" stroke="#2e2e2e" stroke-width=".6"/><path d="M1562.9 274.1 A7.6 7.6 0 0 1 1552.1 284.9 Z" fill="#555"/><circle cx="1557.5" cy="279.5" r="6.2" fill="none" stroke="#d8d8d8" stroke-width="1.1" opacity=".8"/><rect x="1551" y="300" width="14.2" height="12.7" fill="#d0d0d0"/><rect x="1551" y="299.5" width="14.2" height="1" fill="#2a2a2a"/><text x="1546.5" y="318.5" font-family="Liberation Serif" font-style="italic" font-size="12" fill="#e0e0e0" stroke="#535353" stroke-width="2.2" paint-order="stroke">fx</text><rect x="1553" y="350" width="9" height="8.6" fill="#d0d0d0"/><path d="M1554.5 350 L1551 342 Q1550 339.5 1552 339.5 Q1554 340 1555.5 344 L1556 350 Z M1557 350 V341 Q1557.3 339.3 1558.3 341 V350 Z M1559.3 350 L1561 344 Q1563.5 340.5 1564.5 342 Q1565 343.5 1562 346 L1560.5 350 Z" fill="#d0d0d0"/><path d="M1548.5 369.5 Q1552 368.5 1555 371.5 Q1552 374 1548.5 372 Z" fill="#d0d0d0"/><rect x="1555" y="370.8" width="11.5" height="1.6" fill="#d0d0d0"/><path d="M1566.5 377 Q1558 378.5 1558.5 380.5 Q1559 383 1566.5 385 Z" fill="#d0d0d0"/><rect x="1548.5" y="379.8" width="10.5" height="1.6" fill="#d0d0d0"/><g fill="#d0d0d0"><rect x="1548" y="396" width="2" height="1.6"/><rect x="1551" y="396" width="5" height="1.6"/><rect x="1548" y="399.5" width="2" height="1.6"/><rect x="1551" y="399.5" width="5" height="1.6"/><rect x="1548" y="403" width="2" height="1.6"/><rect x="1551" y="403" width="5" height="1.6"/><circle cx="1559.5" cy="399" r="2.3"/><rect x="1558.3" y="400" width="2.4" height="4"/><rect x="1552.5" y="404" width="14" height="5"/><rect x="1552.5" y="410.8" width="14" height="1.4"/></g><text x="1547" y="453.5" font-family="Liberation Sans" font-size="17" fill="#d0d0d0">A</text><rect x="1563.2" y="438" width="1.3" height="16.5" fill="#d0d0d0"/><path d="M1560 466 H1564.2 V481.5 H1562.5 V467.6 H1561.5 V481.5 H1560 V474.5 Q1553.2 474.5 1553.2 470.2 Q1553.2 466 1560 466 Z" fill="#d0d0d0"/><g opacity=".95"><circle cx="1557.5" cy="510.5" r="5.2" fill="#cfcfcf"/><circle cx="1554" cy="516.5" r="5.2" fill="#dadada"/><circle cx="1561" cy="516.5" r="5.2" fill="#e2e2e2"/></g><path d="M1554.8 514 Q1557.5 512 1560.3 514 Q1560 518 1557.5 519.5 Q1555 518 1554.8 514 Z" fill="#6a6a6a"/><path d="M1552.5 512.5 Q1554 509 1557.5 511 Q1556 514 1554.8 514 Z M1562.5 512.5 Q1561 509 1557.5 511 Q1559 514 1560.3 514 Z M1557.5 519.5 Q1555 521.5 1552.8 519.8 Q1557.5 517 1557.5 519.5 Z" fill="#9a9a9a" opacity=".7"/><g fill="#d0d0d0"><rect x="1547.3" y="535" width="4.2" height="4.2"/><rect x="1563.5" y="535" width="4.2" height="4.2"/><rect x="1555.5" y="535.5" width="3.5" height="3.2"/><rect x="1551" y="536.5" width="13" height="1"/></g><path d="M1557.3 538 Q1551 540 1550.8 546.5 M1557.3 538 Q1564 540 1564.3 546.5" fill="none" stroke="#d0d0d0" stroke-width=".9"/><rect x="1549.3" y="546.5" width="3.4" height="3.4" fill="#535353" stroke="#d0d0d0" stroke-width="1"/><rect x="1562.5" y="546.5" width="3.4" height="3.4" fill="#535353" stroke="#d0d0d0" stroke-width="1"/><path d="M1556 575.5 L1562 578.5 V584.5 L1556 587.5 L1550 584.5 V578.5 Z" fill="#cfcfcf" stroke="#3a3a3a" stroke-width=".6"/><path d="M1550 578.5 L1556 581.5 L1562 578.5 M1556 581.5 V587.5" fill="none" stroke="#6a6a6a" stroke-width=".8"/><rect x="1563.5" y="576" width="4" height="4" fill="#d0d0d0"/><rect x="1563.5" y="581.5" width="4" height="4" fill="#d0d0d0"/><rect x="1550" y="588.8" width="17.5" height="3.3" fill="#d0d0d0"/><path d="M1562.5 589.5 H1566 L1564.25 591.3 Z" fill="#333"/><path d="M1549.5 620 L1562 606.5" stroke="#d0d0d0" stroke-width="2.2" stroke-linecap="round"/><path d="M1551 606 L1564.5 619.5" stroke="#d0d0d0" stroke-width="1.8"/><circle cx="1565" cy="618" r="2.8" fill="none" stroke="#d0d0d0" stroke-width="1.6"/><path d="M1548 607 Q1549 603.5 1552.5 604.5 L1551 607.5 L1552.8 608.8 L1554.5 606.5 Q1555.5 610 1552 611 Q1548.5 611 1548 607 Z" fill="#d0d0d0"/><path d="M1550 633.5 L1565.5 640.3 L1550 647 Z" fill="#d0d0d0"/><path d="M1557.5 664.5 L1566 670 L1557.5 675.5 L1549 670 Z" fill="#bdbdbd"/><path d="M1557.5 659.5 L1566 665 L1557.5 670.5 L1549 665 Z" fill="#dcdcdc" stroke="#535353" stroke-width=".8"/><g fill="none" stroke="#d0d0d0" stroke-width="1"><rect x="1551" y="688" width="3.8" height="3.8"/><rect x="1551" y="693.5" width="3.8" height="3.8"/></g><rect x="1550.5" y="699" width="4.8" height="4.8" fill="#d0d0d0"/><path d="M1559 689.5 H1562.5 Q1566.5 694 1564.5 700 Q1563 703 1560 704.5" fill="none" stroke="#d0d0d0" stroke-width="1.8"/><path d="M1558.3 692 L1561 687.5 L1563.5 691.5 Z" fill="#d0d0d0"/></svg>
<svg class="a" style="left:0;top:0" width="1597" height="892"><circle cx="112.5" cy="860.5" r="3" fill="none" stroke="#2e2e2e" stroke-width="2.4" stroke-dasharray="1.3 1"/><circle cx="112.5" cy="860.5" r="1.8" fill="#2e2e2e"/><path d="M117 859 Q120 856 123 859.5 M121.5 857 L123.5 859.7 L120.5 860.5" fill="none" stroke="#2e2e2e" stroke-width="1.1"/></svg>
<div class="a" style="left:160px;top:105px;width:1157px;height:684px;border-radius:6px 6px 5px 5px;box-shadow:0 4px 14px 4px rgba(0,0,0,0.55)"></div>
<div class="a" style="left:160px;top:101px;width:1157px;height:5px;background:linear-gradient(rgba(0,0,0,0),rgba(0,0,0,0.85))"></div>
<div class="a" style="left:160px;top:105px;width:1157px;height:684px;border-radius:6px 6px 5px 5px;background:linear-gradient(#3c3c3c,#2f2f2f 28px,#333 40%,#2e2e2e);border:1px solid #dcdcdc"></div>
<div class="a" style="left:161px;top:180px;width:4px;height:114px;background:linear-gradient(rgba(210,210,210,0),rgba(210,210,210,0.25) 40%,#d2d2d2)"></div>
<div class="a" style="left:1312px;top:180px;width:4px;height:114px;background:linear-gradient(rgba(210,210,210,0),rgba(210,210,210,0.25) 40%,#d2d2d2)"></div>
<div class="a" style="left:161px;top:106px;width:1155px;height:26px;overflow:hidden;border-radius:5px 5px 0 0"><div class="a" style="left:9.8px;top:-3px;width:18px;height:9px;border-radius:5px;background:rgba(200,200,200,0.32);filter:blur(3px)"></div><div class="a" style="left:59.8px;top:-3px;width:18px;height:9px;border-radius:5px;background:rgba(200,200,200,0.32);filter:blur(3px)"></div><div class="a" style="left:109.8px;top:-3px;width:18px;height:9px;border-radius:5px;background:rgba(200,200,200,0.32);filter:blur(3px)"></div><div class="a" style="left:159.8px;top:-3px;width:6px;height:9px;border-radius:5px;background:rgba(200,200,200,0.32);filter:blur(3px)"></div><div class="a" style="left:209.8px;top:-3px;width:18px;height:9px;border-radius:5px;background:rgba(200,200,200,0.32);filter:blur(3px)"></div><div class="a" style="left:259.8px;top:-3px;width:18px;height:9px;border-radius:5px;background:rgba(200,200,200,0.32);filter:blur(3px)"></div><div class="a" style="left:309.8px;top:-3px;width:18px;height:9px;border-radius:5px;background:rgba(200,200,200,0.32);filter:blur(3px)"></div><div class="a" style="left:359.8px;top:-3px;width:18px;height:9px;border-radius:5px;background:rgba(200,200,200,0.32);filter:blur(3px)"></div><div class="a" style="left:409.8px;top:-3px;width:18px;height:9px;border-radius:5px;background:rgba(200,200,200,0.32);filter:blur(3px)"></div><div class="a" style="left:459.8px;top:-3px;width:18px;height:9px;border-radius:5px;background:rgba(200,200,200,0.32);filter:blur(3px)"></div><div class="a" style="left:509.8px;top:-3px;width:18px;height:9px;border-radius:5px;background:rgba(200,200,200,0.32);filter:blur(3px)"></div><div class="a" style="left:559.8px;top:-3px;width:18px;height:9px;border-radius:5px;background:rgba(200,200,200,0.32);filter:blur(3px)"></div><div class="a" style="left:609.8px;top:-3px;width:18px;height:9px;border-radius:5px;background:rgba(200,200,200,0.32);filter:blur(3px)"></div><div class="a" style="left:659.8px;top:-3px;width:24px;height:9px;border-radius:5px;background:rgba(200,200,200,0.32);filter:blur(3px)"></div><div class="a" style="left:709.8px;top:-3px;width:24px;height:9px;border-radius:5px;background:rgba(200,200,200,0.32);filter:blur(3px)"></div><div class="a" style="left:759.8px;top:-3px;width:24px;height:9px;border-radius:5px;background:rgba(200,200,200,0.32);filter:blur(3px)"></div><div class="a" style="left:809.8px;top:-3px;width:24px;height:9px;border-radius:5px;background:rgba(200,200,200,0.32);filter:blur(3px)"></div><div class="a" style="left:859.8px;top:-3px;width:24px;height:9px;border-radius:5px;background:rgba(200,200,200,0.32);filter:blur(3px)"></div><div class="a" style="left:909.8px;top:-3px;width:24px;height:9px;border-radius:5px;background:rgba(200,200,200,0.32);filter:blur(3px)"></div><div class="a" style="left:959.8px;top:-3px;width:24px;height:9px;border-radius:5px;background:rgba(200,200,200,0.32);filter:blur(3px)"></div><div class="a" style="left:1009.8px;top:-3px;width:24px;height:9px;border-radius:5px;background:rgba(200,200,200,0.32);filter:blur(3px)"></div><div class="a" style="left:1059.8px;top:-3px;width:24px;height:9px;border-radius:5px;background:rgba(200,200,200,0.32);filter:blur(3px)"></div><div class="a" style="left:1109.8px;top:-3px;width:24px;height:9px;border-radius:5px;background:rgba(200,200,200,0.32);filter:blur(3px)"></div></div>
<div class="a" style="left:166px;top:111px;width:64px;height:15px;background:rgba(255,255,255,0.72);border-radius:7px;filter:blur(5px)"></div>
<div class="a" style="left:1272px;top:107px;width:32px;height:15px;background:rgba(255,255,255,0.9);border-radius:8px;filter:blur(5px)"></div>
<div class="t" style="left:167.80px;top:112.54px;font-size:12px;color:#111;font-weight:normal;font-family:'Liberation Sans';letter-spacing:0.002px;">Установки</div>
<svg class="a" style="left:1282px;top:107px;" width="13" height="13" viewBox="0 0 13 13"><path d="M1.5 1.5 L11.5 11.5 M11.5 1.5 L1.5 11.5" stroke="#a5213a" stroke-width="1.9"/></svg>
<div class="a" style="left:165px;top:132px;width:1147px;height:652px;border:1px solid #d8d8d8;border-radius:2px"></div>
<div class="a" style="left:166px;top:133px;width:1145px;height:650px;background:#fff;border:1px solid #2a2a2a"></div>
<div class="a" style="left:167px;top:134px;width:1143px;height:648px;background:#ececec;border:1px solid #fafafa"></div>
<div class="a" style="left:177px;top:144px;width:183px;height:628px;background:#fff;border:1px solid #a0a0a0"></div>
<div class="a" style="left:178px;top:165px;width:181px;height:18px;background:#3399ff"></div>
<div class="t" style="left:183.20px;top:150.44px;font-size:10px;color:#000;font-weight:normal;font-family:'Liberation Sans';">Основные</div>
<div class="t" style="left:183.20px;top:170.44px;font-size:10px;color:#0a1446;font-weight:normal;font-family:'Liberation Sans';">Интерфейс</div>
<div class="t" style="left:183.20px;top:190.44px;font-size:10px;color:#000;font-weight:normal;font-family:'Liberation Sans';">Синхронизировать настройки</div>
<div class="t" style="left:183.20px;top:210.44px;font-size:10px;color:#000;font-weight:normal;font-family:'Liberation Sans';">Обработка файлов</div>
<div class="t" style="left:183.20px;top:230.44px;font-size:10px;color:#000;font-weight:normal;font-family:'Liberation Sans';">Производительность</div>
<div class="t" style="left:183.20px;top:250.43px;font-size:10px;color:#000;font-weight:normal;font-family:'Liberation Sans';">Курсоры</div>
<div class="t" style="left:183.20px;top:270.44px;font-size:10px;color:#000;font-weight:normal;font-family:'Liberation Sans';">Прозрачность и цветовой охват</div>
<div class="t" style="left:183.20px;top:290.44px;font-size:10px;color:#000;font-weight:normal;font-family:'Liberation Sans';">Единицы измерения и линейки</div>
<div class="t" style="left:183.20px;top:310.44px;font-size:10px;color:#000;font-weight:normal;font-family:'Liberation Sans';">Направляющие, сетка и фрагменты</div>
<div class="t" style="left:183.20px;top:330.44px;font-size:10px;color:#000;font-weight:normal;font-family:'Liberation Sans';">Внешние модули</div>
<div class="t" style="left:183.20px;top:350.44px;font-size:10px;color:#000;font-weight:normal;font-family:'Liberation Sans';">Шрифты</div>
<div class="t" style="left:183.20px;top:370.44px;font-size:10px;color:#000;font-weight:normal;font-family:'Liberation Sans';">3D</div>
<div class="a" style="left:368px;top:152px;width:795px;height:165px;border:1px solid #a8a8a8;box-shadow:inset 1px 1px 0 #fafafa, 1px 1px 0 #fafafa"></div>
<div class="a" style="left:384.5px;top:150px;width:86px;height:5px;background:#ececec"></div>
<div class="t" style="left:390.50px;top:145.84px;font-size:12px;color:#000;font-weight:normal;font-family:'Liberation Sans';letter-spacing:-0.019px;">Внешний вид</div>
<div class="t" style="left:378.20px;top:179.64px;font-size:12px;color:#000;font-weight:normal;font-family:'Liberation Sans';letter-spacing:0.041px;">Цветовая тема:</div>
<div class="a" style="left:513px;top:168px;width:36px;height:36px;border:2px solid #9a9a9a"></div>
<div class="a" style="left:478px;top:171px;width:30px;height:30px;background:#333333;border:1px solid #9c9c9c;box-shadow:inset 0 0 0 1px #fff"></div>
<div class="a" style="left:516px;top:171px;width:30px;height:30px;background:#535353;border:1px solid #9c9c9c;box-shadow:inset 0 0 0 1px #fff"></div>
<div class="a" style="left:554px;top:171px;width:30px;height:30px;background:#b3b3b3;border:1px solid #9c9c9c;box-shadow:inset 0 0 0 1px #fff"></div>
<div class="a" style="left:592px;top:171px;width:30px;height:30px;background:#d5d5d5;border:1px solid #9c9c9c;box-shadow:inset 0 0 0 1px #fff"></div>
<div class="t" style="left:613.40px;top:215.84px;font-size:12px;color:#000;font-weight:normal;font-family:'Liberation Sans';letter-spacing:-0.364px;">Цвет</div>
<div class="t" style="left:748.40px;top:215.64px;font-size:12px;color:#000;font-weight:normal;font-family:'Liberation Sans';letter-spacing:-0.144px;">Граница</div>
<div class="t" style="left:381.40px;top:240.54px;font-size:12px;color:#000;font-weight:normal;font-family:'Liberation Sans';letter-spacing:0.282px;">Режим &quot;Стандартное окно&quot;:</div>
<div class="t" style="left:379.30px;top:264.34px;font-size:12px;color:#000;font-weight:normal;font-family:'Liberation Sans';letter-spacing:0.162px;">Полноэкранный вид с меню:</div>
<div class="t" style="left:465.60px;top:288.14px;font-size:12px;color:#000;font-weight:normal;font-family:'Liberation Sans';letter-spacing:0.064px;">Целый экран:</div>
<div class="a" style="left:551px;top:234px;width:153px;height:21px;background:#fff;border:1px solid #cfcfcf;border-top-color:#a9a9a9;border-radius:2px"></div>
<div class="t" style="left:557.30px;top:240.04px;font-size:12px;color:#000;font-weight:normal;font-family:'Liberation Sans';">По умолчанию</div>
<svg class="a" style="left:691.5px;top:243px;" width="8" height="5" viewBox="0 0 8 5"><path d="M0 0 H7.5 L3.75 4.2 Z" fill="#000"/></svg>
<div class="a" style="left:713px;top:234px;width:118px;height:21px;background:#fff;border:1px solid #cfcfcf;border-top-color:#a9a9a9;border-radius:2px"></div>
<div class="t" style="left:720.20px;top:240.04px;font-size:12px;color:#000;font-weight:normal;font-family:'Liberation Sans';">Тень</div>
<svg class="a" style="left:819px;top:243px;" width="8" height="5" viewBox="0 0 8 5"><path d="M0 0 H7.5 L3.75 4.2 Z" fill="#000"/></svg>
<div class="a" style="left:551px;top:260px;width:153px;height:21px;background:#fff;border:1px solid #cfcfcf;border-top-color:#a9a9a9;border-radius:2px"></div>
<div class="t" style="left:557.30px;top:266.04px;font-size:12px;color:#000;font-weight:normal;font-family:'Liberation Sans';">По умолчанию</div>
<svg class="a" style="left:691.5px;top:269px;" width="8" height="5" viewBox="0 0 8 5"><path d="M0 0 H7.5 L3.75 4.2 Z" fill="#000"/></svg>
<div class="a" style="left:713px;top:260px;width:118px;height:21px;background:#fff;border:1px solid #cfcfcf;border-top-color:#a9a9a9;border-radius:2px"></div>
<div class="t" style="left:720.20px;top:266.04px;font-size:12px;color:#000;font-weight:normal;font-family:'Liberation Sans';">Тень</div>
<svg class="a" style="left:819px;top:269px;" width="8" height="5" viewBox="0 0 8 5"><path d="M0 0 H7.5 L3.75 4.2 Z" fill="#000"/></svg>
<div class="a" style="left:551px;top:286px;width:153px;height:21px;background:#fff;border:1px solid #cfcfcf;border-top-color:#a9a9a9;border-radius:2px"></div>
<div class="t" style="left:557.30px;top:292.04px;font-size:12px;color:#000;font-weight:normal;font-family:'Liberation Sans';">Черный</div>
<svg class="a" style="left:691.5px;top:295px;" width="8" height="5" viewBox="0 0 8 5"><path d="M0 0 H7.5 L3.75 4.2 Z" fill="#000"/></svg>
<div class="a" style="left:713px;top:286px;width:118px;height:21px;background:#fff;border:1px solid #cfcfcf;border-top-color:#a9a9a9;border-radius:2px"></div>
<div class="t" style="left:720.20px;top:292.04px;font-size:12px;color:#000;font-weight:normal;font-family:'Liberation Sans';">Не показывать</div>
<svg class="a" style="left:819px;top:295px;" width="8" height="5" viewBox="0 0 8 5"><path d="M0 0 H7.5 L3.75 4.2 Z" fill="#000"/></svg>
<div class="a" style="left:368px;top:334px;width:795px;height:178px;border:1px solid #a8a8a8;box-shadow:inset 1px 1px 0 #fafafa, 1px 1px 0 #fafafa"></div>
<div class="a" style="left:384.6px;top:332px;width:76.6px;height:5px;background:#ececec"></div>
<div class="t" style="left:390.60px;top:327.84px;font-size:12px;color:#000;font-weight:normal;font-family:'Liberation Sans';letter-spacing:0.079px;">Параметры</div>
<div class="a" style="left:378px;top:348px;width:13px;height:13px;background:linear-gradient(135deg,#dadada,#fdfdfd);border:1px solid #8e8e8e;box-shadow:inset 0 0 0 1px #f4f4f4"></div>
<div class="t" style="left:394.70px;top:348.94px;font-size:12px;color:#000;font-weight:normal;font-family:'Liberation Sans';letter-spacing:0.149px;">Автоматически сворачивать панели со значками</div>
<div class="a" style="left:378px;top:369px;width:13px;height:13px;background:linear-gradient(135deg,#dadada,#fdfdfd);border:1px solid #8e8e8e;box-shadow:inset 0 0 0 1px #f4f4f4"></div>
<svg class="a" style="left:378px;top:369px;" width="13" height="13" viewBox="0 0 13 13"><path d="M3.2 6.6 L5.6 10 L10 2.8" fill="none" stroke="#141414" stroke-width="1.7"/></svg>
<div class="t" style="left:394.70px;top:369.94px;font-size:12px;color:#000;font-weight:normal;font-family:'Liberation Sans';letter-spacing:0.114px;">Автопоказ скрытых панелей</div>
<div class="a" style="left:378px;top:390px;width:13px;height:13px;background:linear-gradient(135deg,#dadada,#fdfdfd);border:1px solid #8e8e8e;box-shadow:inset 0 0 0 1px #f4f4f4"></div>
<div class="t" style="left:394.70px;top:390.94px;font-size:12px;color:#000;font-weight:normal;font-family:'Liberation Sans';letter-spacing:0.094px;">Открыть документы во вкладках</div>
<div class="a" style="left:378px;top:411px;width:13px;height:13px;background:linear-gradient(135deg,#dadada,#fdfdfd);border:1px solid #8e8e8e;box-shadow:inset 0 0 0 1px #f4f4f4"></div>
<svg class="a" style="left:378px;top:411px;" width="13" height="13" viewBox="0 0 13 13"><path d="M3.2 6.6 L5.6 10 L10 2.8" fill="none" stroke="#141414" stroke-width="1.7"/></svg>
<div class="t" style="left:394.70px;top:411.94px;font-size:12px;color:#000;font-weight:normal;font-family:'Liberation Sans';letter-spacing:0.215px;">Включить закрепление окон незакрепленных документов</div>
<div class="a" style="left:378px;top:432px;width:13px;height:13px;background:linear-gradient(135deg,#dadada,#fdfdfd);border:1px solid #8e8e8e;box-shadow:inset 0 0 0 1px #f4f4f4"></div>
<div class="t" style="left:394.70px;top:432.94px;font-size:12px;color:#000;font-weight:normal;font-family:'Liberation Sans';letter-spacing:-0.046px;">Показывать каналы в цвете</div>
<div class="a" style="left:739px;top:369px;width:13px;height:13px;background:linear-gradient(135deg,#dadada,#fdfdfd);border:1px solid #8e8e8e;box-shadow:inset 0 0 0 1px #f4f4f4"></div>
<svg class="a" style="left:739px;top:369px;" width="13" height="13" viewBox="0 0 13 13"><path d="M3.2 6.6 L5.6 10 L10 2.8" fill="none" stroke="#141414" stroke-width="1.7"/></svg>
<div class="t" style="left:755.10px;top:369.94px;font-size:12px;color:#000;font-weight:normal;font-family:'Liberation Sans';letter-spacing:0.023px;">Показывать цвета меню</div>
<div class="a" style="left:739px;top:390px;width:13px;height:13px;background:linear-gradient(135deg,#dadada,#fdfdfd);border:1px solid #8e8e8e;box-shadow:inset 0 0 0 1px #f4f4f4"></div>
<svg class="a" style="left:739px;top:390px;" width="13" height="13" viewBox="0 0 13 13"><path d="M3.2 6.6 L5.6 10 L10 2.8" fill="none" stroke="#141414" stroke-width="1.7"/></svg>
<div class="t" style="left:755.10px;top:390.94px;font-size:12px;color:#000;font-weight:normal;font-family:'Liberation Sans';letter-spacing:-0.023px;">Показывать подсказки</div>
<div class="a" style="left:739px;top:411px;width:13px;height:13px;background:linear-gradient(135deg,#dadada,#fdfdfd);border:1px solid #8e8e8e;box-shadow:inset 0 0 0 1px #f4f4f4"></div>
<svg class="a" style="left:739px;top:411px;" width="13" height="13" viewBox="0 0 13 13"><path d="M3.2 6.6 L5.6 10 L10 2.8" fill="none" stroke="#141414" stroke-width="1.7"/></svg>
<div class="t" style="left:755.10px;top:411.94px;font-size:12px;color:#000;font-weight:normal;font-family:'Liberation Sans';letter-spacing:0.276px;">Включить тени для текста</div>
<div class="t" style="left:378.30px;top:457.64px;font-size:12px;color:#000;font-weight:normal;font-family:'Liberation Sans';letter-spacing:0.103px;">Показать значения преобразования:</div>
<div class="a" style="left:595px;top:453px;width:117px;height:21px;background:#fff;border:1px solid #cfcfcf;border-top-color:#a9a9a9;border-radius:2px"></div>
<div class="t" style="left:602.20px;top:459.24px;font-size:12px;color:#000;font-weight:normal;font-family:'Liberation Sans';">Вверху справа</div>
<svg class="a" style="left:699.5px;top:462px;" width="8" height="5" viewBox="0 0 8 5"><path d="M0 0 H7.5 L3.75 4.2 Z" fill="#000"/></svg>
<div class="a" style="left:378px;top:483px;width:277px;height:20px;border:1px solid #6c6c6c;border-radius:3px;background:radial-gradient(ellipse 100% 55% at 50% 0,#fbfbfb,#ececec 98%,rgba(0,0,0,0) 100%),linear-gradient(#b4b4b4 50%,#8e8e8e 80%,#c6c6c6 92%,#9a9a9a);box-shadow:inset 1px 0 0 rgba(255,255,255,.7),inset -1px 0 0 rgba(255,255,255,.7)"></div>
<div class="t" style="left:389.30px;top:488.04px;font-size:12px;color:#111;font-weight:normal;font-family:'Liberation Sans';letter-spacing:0.180px;">Восстановить рабочие среды по умолчанию</div>
<div class="a" style="left:368px;top:529px;width:795px;height:117px;border:1px solid #a8a8a8;box-shadow:inset 1px 1px 0 #fafafa, 1px 1px 0 #fafafa"></div>
<div class="a" style="left:384.4px;top:527px;width:43.3px;height:5px;background:#ececec"></div>
<div class="t" style="left:390.40px;top:523.34px;font-size:12px;color:#000;font-weight:normal;font-family:'Liberation Sans';letter-spacing:0.270px;">Текст</div>
<div class="t" style="left:437.60px;top:548.34px;font-size:12px;color:#000;font-weight:normal;font-family:'Liberation Sans';letter-spacing:0.087px;">Язык интерфейса:</div>
<div class="a" style="left:546px;top:543px;width:181px;height:22px;background:#fff;border:1px solid #cfcfcf;border-top-color:#a9a9a9;border-radius:2px"></div>
<div class="t" style="left:553.20px;top:549.44px;font-size:12px;color:#000;font-weight:normal;font-family:'Liberation Sans';">Русский</div>
<svg class="a" style="left:714.7px;top:553px;" width="8" height="5" viewBox="0 0 8 5"><path d="M0 0 H7.5 L3.75 4.2 Z" fill="#000"/></svg>
<div class="t" style="left:415.30px;top:579.04px;font-size:12px;color:#000;font-weight:normal;font-family:'Liberation Sans';letter-spacing:-0.009px;">Размер шрифта меню:</div>
<div class="a" style="left:546px;top:574px;width:85px;height:21px;background:#fff;border:1px solid #cfcfcf;border-top-color:#a9a9a9;border-radius:2px"></div>
<div class="t" style="left:553.20px;top:580.14px;font-size:12px;color:#000;font-weight:normal;font-family:'Liberation Sans';">Малый</div>
<svg class="a" style="left:619.2px;top:583px;" width="8" height="5" viewBox="0 0 8 5"><path d="M0 0 H7.5 L3.75 4.2 Z" fill="#000"/></svg>
<svg class="a" style="left:380px;top:607.7px;" width="28" height="28" viewBox="0 0 28 28"><defs><radialGradient id="ig" cx="0.4" cy="0.35" r="0.7"><stop offset="0" stop-color="#fff"/><stop offset="1" stop-color="#d8d8d8"/></radialGradient></defs><circle cx="14" cy="13.5" r="12.3" fill="url(#ig)" stroke="#4a4a4a" stroke-width="1.6"/><circle cx="14" cy="6.9" r="2.2" fill="#3a3a3a"/><path d="M10.6 12.4 L16.2 11.8 V20.3 L18.1 20.9 V21.9 H9.9 V20.9 L12.4 20.3 V13.6 L10.6 13.5 Z" fill="#3a3a3a"/></svg>
<div class="t" style="left:417.90px;top:607.34px;font-size:12px;color:#000;font-weight:normal;font-family:'Liberation Sans';letter-spacing:0.174px;">Изменения вступят в силу после перезапуска программы Photoshop.</div>
<div class="a" style="left:1178px;top:144px;width:122px;height:20px;border:1px solid #20607a;border-radius:3px;background:radial-gradient(ellipse 100% 55% at 50% 0,#b9e2f3,#a6d6ea 98%,rgba(0,0,0,0) 100%),linear-gradient(#4596b8 50%,#2585ad 75%,#3cc3e6 90%,#2a8db0);box-shadow:inset 1px 0 0 rgba(255,255,255,.7),inset -1px 0 0 rgba(255,255,255,.7)"></div>
<div class="t" style="left:1230.35px;top:148.84px;font-size:12px;color:#111;font-weight:normal;font-family:'Liberation Sans';letter-spacing:-0.044px;">OK</div>
<div class="a" style="left:1178px;top:172px;width:122px;height:20px;border:1px solid #6c6c6c;border-radius:3px;background:radial-gradient(ellipse 100% 55% at 50% 0,#fbfbfb,#ececec 98%,rgba(0,0,0,0) 100%),linear-gradient(#b4b4b4 50%,#8e8e8e 80%,#c6c6c6 92%,#9a9a9a);box-shadow:inset 1px 0 0 rgba(255,255,255,.7),inset -1px 0 0 rgba(255,255,255,.7)"></div>
<div class="t" style="left:1218.00px;top:176.84px;font-size:12px;color:#111;font-weight:normal;font-family:'Liberation Sans';letter-spacing:-0.212px;">Отмена</div>
<div class="a" style="left:1178px;top:200px;width:122px;height:20px;border:1px solid #6c6c6c;border-radius:3px;background:radial-gradient(ellipse 100% 55% at 50% 0,#fbfbfb,#ececec 98%,rgba(0,0,0,0) 100%),linear-gradient(#b4b4b4 50%,#8e8e8e 80%,#c6c6c6 92%,#9a9a9a);box-shadow:inset 1px 0 0 rgba(255,255,255,.7),inset -1px 0 0 rgba(255,255,255,.7)"></div>
<div class="t" style="left:1221.80px;top:204.84px;font-size:12px;color:#111;font-weight:normal;font-family:'Liberation Sans';">Назад</div>
<div class="a" style="left:1178px;top:228px;width:122px;height:20px;border:1px solid #6c6c6c;border-radius:3px;background:radial-gradient(ellipse 100% 55% at 50% 0,#fbfbfb,#ececec 98%,rgba(0,0,0,0) 100%),linear-gradient(#b4b4b4 50%,#8e8e8e 80%,#c6c6c6 92%,#9a9a9a);box-shadow:inset 1px 0 0 rgba(255,255,255,.7),inset -1px 0 0 rgba(255,255,255,.7)"></div>
<div class="t" style="left:1218.37px;top:232.84px;font-size:12px;color:#111;font-weight:normal;font-family:'Liberation Sans';">Вперед</div>
</body></html>
